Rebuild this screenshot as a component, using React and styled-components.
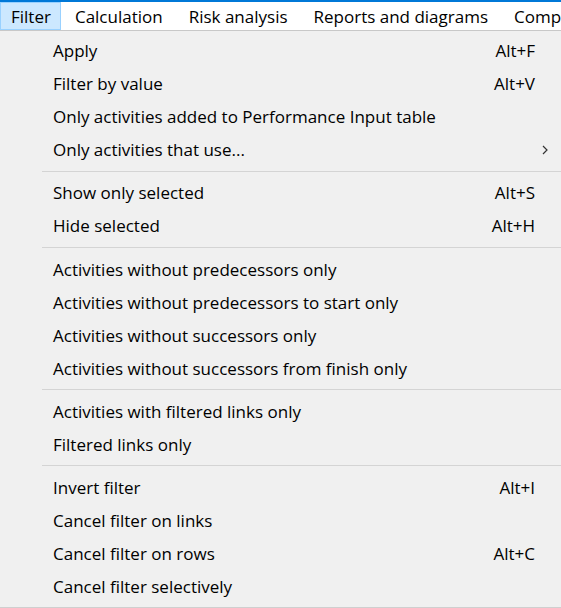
import React from "react";
import styled, { createGlobalStyle } from "styled-components";

const Global = createGlobalStyle`
  html, body { margin: 0; padding: 0; background: #f0f0f0; }
  body { font-family: "Open Sans", "Noto Sans", sans-serif; }
`;

const Page = styled.div`
  width: 561px;
  height: 608px;
  overflow: hidden;
  background: #f0f0f0;
  display: flex;
  flex-direction: column;
`;

const TopLine = styled.div`
  height: 2px;
  background: #0078d7;
  flex: none;
`;

const MenuBar = styled.div`
  height: 28px;
  background: #ffffff;
  border-bottom: 1px solid #c8c8c8;
  display: flex;
  align-items: stretch;
  flex: none;
  white-space: nowrap;
`;

const BarItem = styled.div`
  display: flex;
  align-items: center;
  font-size: 17px;
  color: #000;
  background: ${(p) => (p.$active ? "#cce8ff" : "transparent")};
  border: 1px solid ${(p) => (p.$active ? "#99d1ff" : "transparent")};
  padding-left: ${(p) => (p.$active ? "10px" : "12px")};
  padding-right: ${(p) => (p.$active ? "9px" : "12px")};
  margin-right: ${(p) => (p.$active ? "1px" : "0")};
`;

const Menu = styled.div`
  flex: 1;
  display: flex;
  flex-direction: column;
  padding-top: 3px;
  border-bottom: 1px solid #cfcfcf;
`;

const Row = styled.div`
  height: 33px;
  flex: none;
  display: flex;
  align-items: center;
  padding-left: 53px;
  padding-right: 26px;
  font-size: 17px;
  color: #000;
`;

const Label = styled.span`
  flex: 1;
`;

const Shortcut = styled.span``;

const Chevron = styled.span`
  margin-right: -13px;
  display: flex;
  align-items: center;
`;

const Separator = styled.div`
  height: 10.25px;
  flex: none;
  display: flex;
  align-items: center;
  padding-left: 42px;
  &::after {
    content: "";
    flex: 1;
    height: 1px;
    background: #d4d4d4;
  }
`;

const groups = [
  [
    ["Apply", "Alt+F"],
    ["Filter by value", "Alt+V"],
    ["Only activities added to Performance Input table"],
    ["Only activities that use...", null, true],
  ],
  [
    ["Show only selected", "Alt+S"],
    ["Hide selected", "Alt+H"],
  ],
  [
    ["Activities without predecessors only"],
    ["Activities without predecessors to start only"],
    ["Activities without successors only"],
    ["Activities without successors from finish only"],
  ],
  [
    ["Activities with filtered links only"],
    ["Filtered links only"],
  ],
  [
    ["Invert filter", "Alt+I"],
    ["Cancel filter on links"],
    ["Cancel filter on rows", "Alt+C"],
    ["Cancel filter selectively"],
  ],
];

export default function App() {
  return (
    <Page>
      <Global />
      <TopLine />
      <MenuBar>
        <BarItem $active>Filter</BarItem>
        <BarItem>Calculation</BarItem>
        <BarItem>Risk analysis</BarItem>
        <BarItem>Reports and diagrams</BarItem>
        <BarItem>Comp</BarItem>
      </MenuBar>
      <Menu>
        {groups.map((g, gi) => (
          <React.Fragment key={gi}>
            {gi > 0 && <Separator />}
            {g.map(([label, sc, sub]) => (
              <Row key={label}>
                <Label>{label}</Label>
                {sc && <Shortcut>{sc}</Shortcut>}
                {sub && (
                  <Chevron>
                    <svg width="6" height="10" viewBox="0 0 6 10">
                      <path d="M1 1 L5 5 L1 9" fill="none" stroke="#333" strokeWidth="1.2" />
                    </svg>
                  </Chevron>
                )}
              </Row>
            ))}
          </React.Fragment>
        ))}
      </Menu>
    </Page>
  );
}
